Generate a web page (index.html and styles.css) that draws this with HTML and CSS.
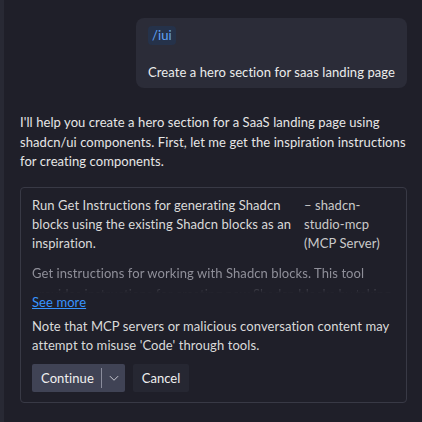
FILE: index.html
```html
<!DOCTYPE html>
<html>
<head>
<meta charset="utf-8">
<link rel="stylesheet" href="styles.css">
</head>
<body>
<div class="app">
  <div class="strip"></div>
  <main class="chat">
    <div class="request">
      <span class="chip">/iui</span>
      <p class="request-text">Create a hero section for saas landing page</p>
    </div>
    <p class="response">I'll help you create a hero section for a SaaS landing page using shadcn/ui components. First, let me get the inspiration instructions for creating components.</p>
    <section class="card">
      <div class="card-head">
        <div class="title">Run Get Instructions for generating Shadcn blocks using the existing Shadcn blocks as an inspiration.</div>
        <div class="source">– shadcn-studio-mcp (MCP Server)</div>
      </div>
      <div class="desc">Get instructions for working with Shadcn blocks. This tool provides instructions for creating new Shadcn blocks by taking inspiration from existing blocks.</div>
      <a class="more" href="#">See more</a>
      <p class="note">Note that MCP servers or malicious conversation content may attempt to misuse 'Code' through tools.</p>
      <div class="actions">
        <div class="split">
          <span class="split-label">Continue</span>
          <span class="split-sep"></span>
          <span class="split-arrow"><svg width="12" height="12" viewBox="0 0 16 16"><path d="M2.5 5.5l5.5 5.5 5.5-5.5" fill="none" stroke="#d6d6de" stroke-width="1.2"/></svg></span>
        </div>
        <button class="btn-secondary">Cancel</button>
      </div>
    </section>
  </main>
</div>
</body>
</html>
```

FILE: styles.css
```css
* { box-sizing: border-box; }
html, body { margin: 0; padding: 0; }
body {
  background: #1f1f29;
  font-family: "Lato", "Noto Sans", sans-serif;
  font-size: 13px;
  letter-spacing: 0.08px;
  color: #cccccc;
  width: 422px;
  height: 422px;
  overflow: hidden;
}
.app { display: flex; height: 422px; }
.strip { width: 4px; background: #282934; flex: none; }
.chat {
  flex: 1;
  display: flex;
  flex-direction: column;
  padding: 18px 15px 0 16px;
}
.request {
  align-self: flex-end;
  background: #2b2c38;
  border-radius: 8px;
  padding: 8px 12px 7px 12px;
}
.chip {
  display: inline-block;
  background: #25324a;
  color: #62a3f7;
  border-radius: 4px;
  padding: 0 4px;
  line-height: 19px;
}
.request-text { margin: 18px 0 0 0; line-height: 18px; color: #ececec; white-space: nowrap; }
.response { margin: 25px 0 0 0; line-height: 19.5px; color: #e6e6e6; }
.card {
  margin-top: 15px;
  border: 1px solid #383945;
  border-radius: 4px;
  padding: 8px 11px 10px 11px;
}
.card-head { display: flex; gap: 8px; line-height: 19px; color: #dadada; }
.title { flex: 1; }
.source { width: 91px; flex: none; color: #cacaca; }
.desc {
  margin-top: 10px;
  color: #8f8f99;
  line-height: 21px;
  height: 30px;
  overflow: hidden;
  -webkit-mask-image: linear-gradient(to bottom, #000 55%, transparent 100%);
  mask-image: linear-gradient(to bottom, #000 55%, transparent 100%);
}
.more { display: block; color: #3794ff; text-decoration: underline; line-height: 18px; }
.note { margin: 6px 0 0 0; line-height: 19px; color: #dadada; }
.actions { display: flex; gap: 8px; margin-top: 9px; }
.split {
  display: flex;
  align-items: center;
  background: #404355;
  border-radius: 2px;
  height: 28px;
  width: 93px;
  color: #f0f0f0;
}
.split-label { padding-left: 9px; width: 69px; }
.split-sep { width: 1px; height: 20px; background: #8a8c9c; }
.split-arrow { flex: 1; display: flex; justify-content: center; align-items: center; }
.btn-secondary {
  font: inherit;
  color: #f0f0f0;
  background: #262732;
  border: none;
  border-radius: 2px;
  height: 28px;
  width: 56px;
  padding: 0;
}
```
